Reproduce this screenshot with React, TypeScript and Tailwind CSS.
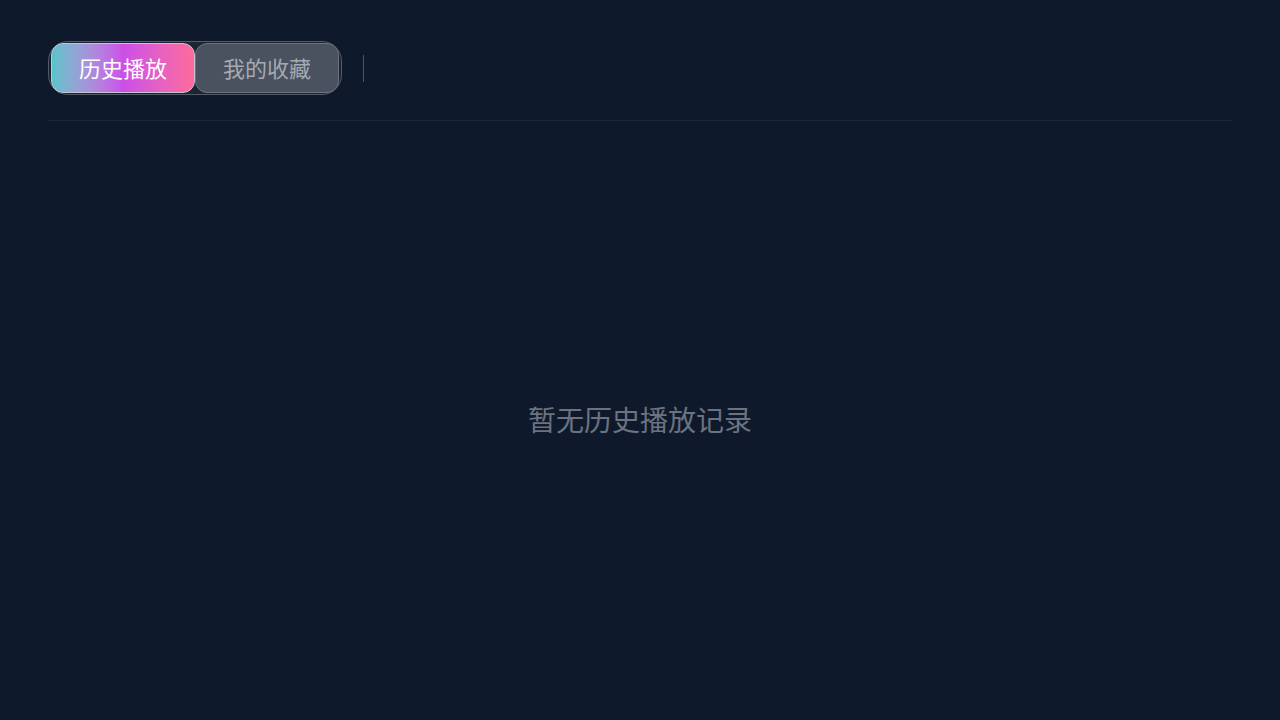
import React, { useState } from "react";

export default function App() {
  const [tab, setTab] = useState<"history" | "fav">("history");
  const tabs: { key: "history" | "fav"; label: string }[] = [
    { key: "history", label: "历史播放" },
    { key: "fav", label: "我的收藏" },
  ];
  return (
    <div
      className="flex h-[720px] w-full flex-col bg-[#0e1a2b] px-12"
      style={{ fontFamily: '"Noto Sans CJK SC", "Noto Sans", sans-serif' }}
    >
      <div className="flex items-center gap-[21px] border-b border-[#1c2838] pb-[25px] pt-[41px]">
        <div className="flex rounded-[20px] border border-[#525a68] bg-[#1b2432] px-[2px] py-[1px]">
          {tabs.map((t) => (
            <button
              key={t.key}
              onClick={() => setTab(t.key)}
              className={
                t.key === tab
                  ? "flex h-[50px] w-[144px] items-center justify-center rounded-[12px] border border-[#c9c3d6] bg-gradient-to-r from-[#55c4c9] via-[#cc4ee8] to-[#ff6a9a] pb-[2px] text-[22px] text-white"
                  : "flex h-[50px] w-[144px] items-center justify-center rounded-[12px] border border-[#6b7280] bg-[#4a5260] pb-[2px] text-[22px] text-[#a4a9b2]"
              }
            >
              {t.label}
            </button>
          ))}
        </div>
        <div className="h-[27px] w-px bg-[#4b5563]" />
      </div>
      <div className="flex flex-1 items-center justify-center pb-[4px]">
        <span className="text-[28px] text-[#6b7280]">
          {tab === "history" ? "暂无历史播放记录" : "暂无收藏记录"}
        </span>
      </div>
    </div>
  );
}
